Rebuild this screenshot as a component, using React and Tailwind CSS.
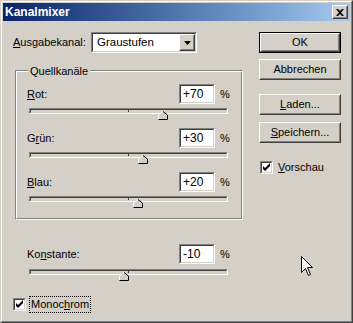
import React from 'react';

// Windows 2000 style "Kanalmixer" dialog

const Sunken = ({ className = '', children }) => (
  <div className={`border border-t-[#808080] border-l-[#808080] border-b-white border-r-white ${className}`}>
    <div className="h-full w-full border border-t-[#404040] border-l-[#404040] border-b-[#d4d0c8] border-r-[#d4d0c8] bg-white">
      {children}
    </div>
  </div>
);

const Raised = ({ className = '', children }) => (
  <div className={`border border-t-white border-l-white border-b-[#404040] border-r-[#404040] ${className}`}>
    <div className="flex h-full w-full items-center justify-center border border-t-[#d4d0c8] border-l-[#d4d0c8] border-b-[#808080] border-r-[#808080] bg-[#d4d0c8]">
      {children}
    </div>
  </div>
);

const Button = ({ children, isDefault }) => (
  <div className={`h-[21px] w-[82px] ${isDefault ? 'border border-black' : ''}`}>
    <Raised className="h-full w-full">{children}</Raised>
  </div>
);

const Checkbox = () => (
  <Sunken className="h-[13px] w-[13px] shrink-0">
    <svg width="9" height="9" viewBox="0 0 9 9" className="block">
      <path d="M1 3 L1 6 L3 8 L8 3 L8 0 L3 5 Z" fill="#000" />
    </svg>
  </Sunken>
);

const Thumb = ({ value }) => {
  const center = 99.5 + value * 0.4975;
  return (
    <svg
      width="10"
      height="9"
      viewBox="0 0 10 9"
      className="absolute top-[3px]"
      style={{ left: Math.round(center - 5) }}
    >
      <polygon points="0.5,8.5 0.5,4 5,0.5 9.5,4 9.5,8.5" fill="#d4d0c8" />
      <polyline points="0.5,8 0.5,4 5,0.5" fill="none" stroke="#fff" />
      <polyline points="5,0.5 9.5,4 9.5,8.5 0.5,8.5" fill="none" stroke="#000" />
    </svg>
  );
};

const Track = ({ value, className = '' }) => (
  <div className={`relative ml-[2px] h-[6px] w-[199px] ${className}`}>
    <div className="h-full w-full border border-t-[#808080] border-l-[#808080] border-b-white border-r-white">
      <div className="relative h-full w-full border border-t-[#404040] border-l-[#404040] border-b-[#d4d0c8] border-r-[#d4d0c8] bg-[#d4d0c8]">
        <span className="absolute left-[97px] top-0 h-full w-px bg-[#404040]" />
      </div>
    </div>
    <Thumb value={value} />
  </div>
);

const ValueRow = ({ label, value, className = '' }) => (
  <div className={`flex h-[20px] items-center ${className}`}>
    <div className="w-[152px]">{label}</div>
    <Sunken className="h-[20px] w-[36px]">
      <div className="pl-[2px] pt-[2px] text-[12px] leading-[13px]">{value}</div>
    </Sunken>
    <div className="ml-[5px]">%</div>
  </div>
);

const Channel = ({ label, value, num, className = '' }) => (
  <div className={className}>
    <ValueRow label={label} value={value} />
    <Track value={num} className="mt-[4px]" />
  </div>
);

export default function App() {
  return (
    <div className="relative h-[323px] w-[353px] border border-t-[#d4d0c8] border-l-[#d4d0c8] border-b-[#404040] border-r-[#404040] bg-[#d4d0c8] font-['Liberation_Sans',Arial,sans-serif] text-[11px] text-black">
      <div className="flex h-full w-full flex-col border border-t-white border-l-white border-b-[#808080] border-r-[#808080] p-px">
        {/* Title bar */}
        <div className="flex h-[18px] shrink-0 items-center justify-between bg-linear-to-r from-[#0a246a] to-[#a6caf0] pl-[2px] pr-[2px]">
          <span className="text-[12px] font-bold text-white">Kanalmixer</span>
          <Raised className="h-[14px] w-[16px]">
            <svg width="8" height="7" viewBox="0 0 8 7">
              <path d="M0 0 H2 L4 2 L6 0 H8 L5 3.5 L8 7 H6 L4 5 L2 7 H0 L3 3.5 Z" fill="#000" />
            </svg>
          </Raised>
        </div>

        {/* Body */}
        <div className="flex flex-1">
          <div className="w-[256px] shrink-0 pl-[10px]">
            <div className="mt-[11px] flex h-[21px] items-center">
              <div className="w-[78px]"><u>A</u>usgabekanal:</div>
              <Sunken className="h-[21px] w-[106px]">
                <div className="flex h-full items-center">
                  <span className="ml-[4px] flex-1 text-[11.5px]">Graustufen</span>
                  <Raised className="h-full w-[16px]">
                    <svg width="7" height="4" viewBox="0 0 7 4">
                      <path d="M0 0 H7 L3.5 4 Z" fill="#000" />
                    </svg>
                  </Raised>
                </div>
              </Sunken>
            </div>

            {/* Quellkanäle group */}
            <div className="relative ml-[2px] mt-[17px] h-[150px] w-[228px] border border-t-[#808080] border-l-[#808080] border-b-white border-r-white">
              <div className="h-full w-full border border-t-white border-l-white border-b-[#808080] border-r-[#808080] pl-[10px] pt-[12px]">
                <Channel label={<><u>R</u>ot:</>} value="+70" num={70} />
                <Channel label={<>G<u>r</u>ün:</>} value="+30" num={30} className="mt-[14px]" />
                <Channel label={<><u>B</u>lau:</>} value="+20" num={20} className="mt-[14px]" />
              </div>
              <span className="absolute left-[12px] top-[-8px] bg-[#d4d0c8] px-[2px]">Quellkanäle</span>
            </div>

            <div className="ml-[14px] mt-[24px]">
              <ValueRow label={<>Ko<u>n</u>stante:</>} value="-10" />
              <Track value={-10} className="mt-[5px]" />
            </div>

            <div className="mt-[22px] flex items-center">
              <Checkbox />
              <span className="ml-[4px] px-px py-px leading-[13px] outline outline-1 outline-dotted outline-black">
                Monoc<u>h</u>rom
              </span>
            </div>
          </div>

          <div className="w-[82px] shrink-0">
            <div className="mt-[11px]"><Button isDefault>OK</Button></div>
            <div className="mt-[6px]"><Button>Abbrechen</Button></div>
            <div className="mt-[14px]"><Button><span><u>L</u>aden...</span></Button></div>
            <div className="mt-[7px]"><Button><span><u>S</u>peichern...</span></Button></div>
            <div className="ml-px mt-[16px] flex items-center">
              <Checkbox />
              <span className="ml-[5px]"><u>V</u>orschau</span>
            </div>
          </div>
        </div>
      </div>

      {/* mouse pointer */}
      <svg width="13" height="21" viewBox="0 0 13 21" className="absolute left-[300px] top-[255px]">
        <path d="M0.5 0.5 V16.5 L4.5 12.5 L7.5 19.5 L9.5 18.5 L6.5 11.5 H11.5 Z" fill="#fff" stroke="#000" strokeLinejoin="round" />
      </svg>
    </div>
  );
}
